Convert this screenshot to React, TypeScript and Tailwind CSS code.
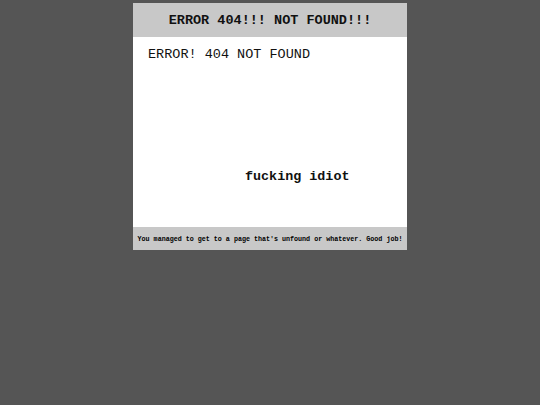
export default function App() {
  return (
    <div className="min-h-[405px] w-full bg-[#555555] pt-[3px]" style={{ fontFamily: '"Liberation Mono", "Courier New", monospace' }}>
      <div className="mx-auto w-[274px] bg-white text-[#111111]">
        <div className="flex h-[34px] items-center justify-center bg-[#c8c8c8] pt-[2px] text-[13.5px] font-bold">
          ERROR 404!!! NOT FOUND!!!
        </div>
        <div className="flex h-[190px] flex-col">
          <div className="pl-[15px] pt-[10px] text-[13.5px] leading-[16px]">ERROR! 404 NOT FOUND</div>
          <div className="mt-[106px] pl-[112px] text-[13.4px] font-bold leading-[16px]">fucking idiot</div>
        </div>
        <div className="flex h-[23px] items-center justify-center bg-[#c8c8c8] pt-[2px] text-[6.7px] font-bold text-black">
          You managed to get to a page that's unfound or whatever. Good job!
        </div>
      </div>
    </div>
  );
}
